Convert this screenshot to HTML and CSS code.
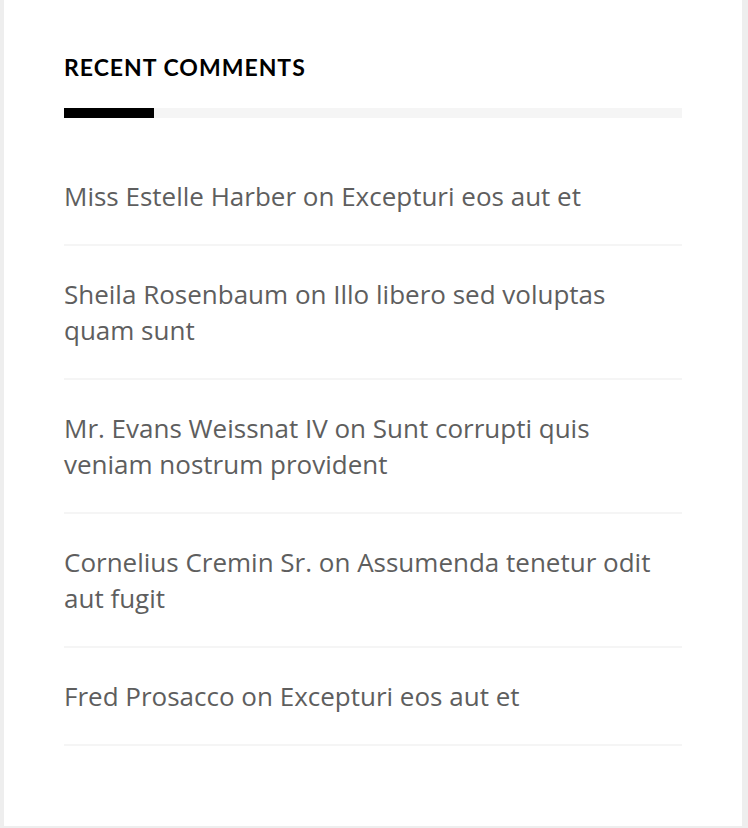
FILE: index.html
```html
<!DOCTYPE html>
<html>
<head>
<meta charset="utf-8">
<link rel="stylesheet" href="styles.css">
</head>
<body>
<aside class="widget">
  <h2 class="widget-title">Recent Comments</h2>
  <div class="title-bar"><span class="title-bar-accent"></span></div>
  <ul class="comment-list">
    <li class="comment-item">Miss Estelle Harber on Excepturi eos aut et</li>
    <li class="comment-item">Sheila Rosenbaum on Illo libero sed voluptas quam sunt</li>
    <li class="comment-item">Mr. Evans Weissnat IV on Sunt corrupti quis veniam nostrum provident</li>
    <li class="comment-item">Cornelius Cremin Sr. on Assumenda tenetur odit aut fugit</li>
    <li class="comment-item">Fred Prosacco on Excepturi eos aut et</li>
  </ul>
</aside>
</body>
</html>
```
FILE: styles.css
```css
html, body {
  margin: 0;
  padding: 0;
  background: #eeeeee;
}
body {
  padding: 0 6px 2px 4px;
  width: 748px;
  box-sizing: border-box;
}
.widget {
  background: #ffffff;
  padding: 52px 60px 80px 60px;
  height: 826px;
  box-sizing: border-box;
}
.widget-title {
  margin: 0;
  font-family: Lato, "Liberation Sans", sans-serif;
  font-weight: 700;
  font-size: 23px;
  line-height: 30px;
  text-transform: uppercase;
  color: #000;
  letter-spacing: 1px;
}
.title-bar {
  margin-top: 26px;
  height: 10px;
  background: #f5f5f5;
  display: flex;
}
.title-bar-accent {
  width: 90px;
  background: #000;
}
.comment-list {
  list-style: none;
  margin: 30px 0 0 0;
  padding: 0;
}
.comment-item {
  font-family: "Open Sans", "Liberation Sans", sans-serif;
  font-size: 26px;
  line-height: 36px;
  color: #5e5e5e;
  padding: 30px 0;
  border-bottom: 2px solid #f5f5f5;
}
```
